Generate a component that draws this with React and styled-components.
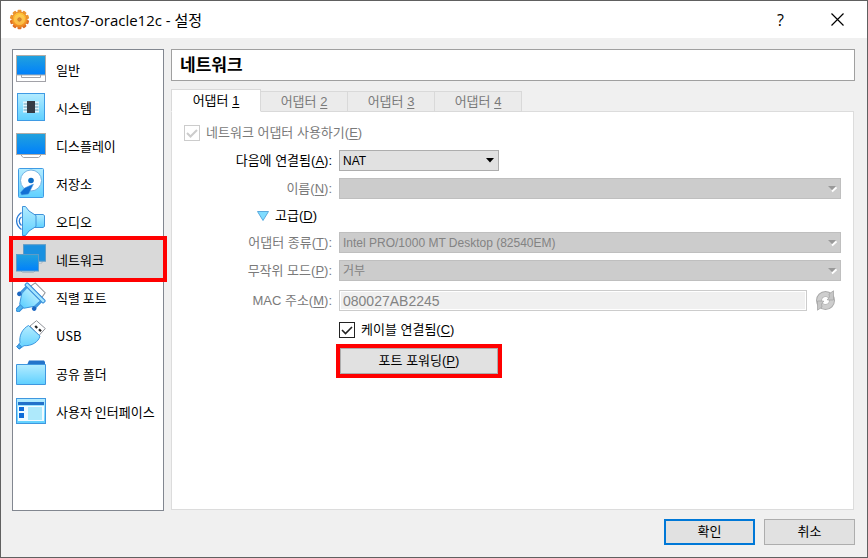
import React from "react";
import styled, { createGlobalStyle, css } from "styled-components";

const korean = `"Liberation Sans", "Noto Sans CJK KR", sans-serif`;

const GlobalStyle = createGlobalStyle`
  *, *::before, *::after { box-sizing: border-box; }
  body { margin: 0; background: #f0f0f0; }
  button, input, select { font: inherit; color: inherit; margin: 0; }
  u { text-underline-offset: 2px; text-decoration-thickness: 1px; }
`;

const Window = styled.div`
  display: flex;
  flex-direction: column;
  min-height: 100vh;
  background: #f0f0f0;
  border: 1px solid #606060;
  color: #000;
  font-family: ${korean};
  font-size: 13px;
  line-height: 16px;
`;

const TitleBar = styled.header`
  display: flex;
  align-items: center;
  height: 37px;
  padding: 0 1px 0 8px;
  background: #fff;
`;

const WindowTitle = styled.h1`
  flex: 1;
  margin: 0 0 0 5px;
  font: 400 15px/20px "Open Sans", "Noto Sans CJK KR", sans-serif;
`;

const CaptionButton = styled.button`
  display: grid;
  place-items: center;
  width: 57px;
  height: 37px;
  padding: 0;
  border: 0;
  background: none;
  font: 400 16px/20px "Open Sans", sans-serif;
`;

const Body = styled.div`
  flex: 1;
  display: flex;
  gap: 7px;
  padding: 11px 12px 0 11px;
`;

const Sidebar = styled.nav`
  flex: none;
  width: 152px;
  background: #fff;
  border: 1px solid #828790;
`;

const SidebarList = styled.ul`
  margin: 0;
  padding: 0;
  list-style: none;
`;

const SidebarItem = styled.button`
  display: flex;
  align-items: center;
  gap: 10px;
  width: 100%;
  height: 38px;
  padding: 0 0 0 3px;
  border: 0;
  background: none;
  font-family: "Noto Sans CJK KR", sans-serif;
  text-align: left;
  white-space: nowrap;
  ${(p) =>
    p.$selected &&
    css`
      position: relative;
      background: #d9d9d9;
      outline: 4px solid #f00;
    `}
`;

const ItemName = styled.span`
  padding-top: 2px;
`;

const Main = styled.main`
  flex: 1;
  display: flex;
  flex-direction: column;
  min-width: 0;
`;

const PageHeading = styled.h2`
  height: 32px;
  margin: 0 0 8px;
  padding: 1px 8px 0;
  background: #fff;
  border: 1px solid #a0a0a0;
  font-size: 17px;
  line-height: 30px;
  font-weight: 700;
`;

const TabList = styled.div`
  position: relative;
  z-index: 1;
  display: flex;
  align-items: flex-end;
  height: 23px;
`;

const Tab = styled.button`
  width: 87px;
  height: 21px;
  padding: 0;
  border: 1px solid #d9d9d9;
  border-left-width: 0;
  background: #ebebeb;
  color: #7a7a7a;
  ${(p) =>
    p.$active &&
    css`
      width: 90px;
      height: 23px;
      border-left-width: 1px;
      border-bottom-color: #fff;
      background: #fff;
      color: #000;
    `}
`;

const Panel = styled.section`
  flex: 1;
  display: flex;
  flex-direction: column;
  gap: 7px;
  margin: -1px 1px 1px 0;
  padding: 13px 12px;
  border: 1px solid #dcdcdc;
  background: #fff;
`;

const Row = styled.div`
  display: grid;
  grid-template-columns: 148px minmax(0, 1fr);
  column-gap: 7px;
  align-items: center;
  margin-top: ${(p) => p.$lead || 0}px;
`;

const FieldLabel = styled.label`
  text-align: right;
  color: ${(p) => (p.$dim ? "#7a7a7a" : "#000")};
`;

const SelectBox = styled.div`
  position: relative;
  width: ${(p) => (p.$narrow ? "160px" : "100%")};
  svg {
    position: absolute;
    right: 4px;
    top: 8px;
    pointer-events: none;
  }
`;

const Select = styled.select`
  display: block;
  appearance: none;
  width: 100%;
  height: 21px;
  padding: 1px 20px 0 3px;
  border: 1px solid #adadad;
  border-radius: 0;
  background: #e1e1e1;
  font-size: 12px;
  &:disabled {
    border-color: #bfbfbf;
    background: #ccc;
    color: #838383;
    opacity: 1;
  }
`;

const Disclosure = styled.button`
  grid-column: 1 / -1;
  display: flex;
  align-items: center;
  gap: 6px;
  height: 19px;
  padding: 0 0 0 73px;
  border: 0;
  background: none;
`;

const MacRow = styled.div`
  display: flex;
  align-items: center;
  gap: 9px;
`;

const TextInput = styled.input`
  flex: 1;
  min-width: 0;
  height: 21px;
  padding: 0 3px;
  border: 1px solid #ccc;
  background: #f0f0f0;
  box-shadow: inset 0 0 0 1px #fff;
  font-size: 14px;
  &:disabled { color: #838383; }
`;

const IconButton = styled.button`
  display: grid;
  width: 25px;
  height: 21px;
  padding: 0;
  border: 0;
  background: none;
`;

const CheckLabel = styled.label`
  display: flex;
  align-items: center;
  gap: 6px;
  height: 16px;
  color: ${(p) => (p.$dim ? "#7a7a7a" : "#000")};
`;

const CheckBox = styled.span`
  position: relative;
  display: flex;
  color: ${(p) => (p.$dim ? "#ccc" : "#222")};
  svg {
    position: absolute;
    inset: 0;
    pointer-events: none;
  }
`;

const CheckInput = styled.input`
  appearance: none;
  width: 16px;
  height: 16px;
  border: 1px solid currentColor;
  background: #fff;
`;

const PushButton = styled.button`
  height: 26px;
  width: 91px;
  padding: 0;
  border: 1px solid #adadad;
  background: #e1e1e1;
  ${(p) => p.$default && css`border: 2px solid #0078d7;`}
  ${(p) =>
    p.$marked &&
    css`
      width: 158px;
      margin-left: 1px;
      outline: 4px solid #f00;
    `}
`;

const Footer = styled.footer`
  display: flex;
  justify-content: flex-end;
  gap: 9px;
  padding: 8px 12px 12px;
`;

function Icon({ children }) {
  return (
    <svg width="30" height="30" viewBox="0 0 30 30" aria-hidden="true">
      <defs>
        <linearGradient id="screen" x1="0" y1="0" x2="0" y2="1">
          <stop offset="0" stopColor="#22a2dc" />
          <stop offset="1" stopColor="#0080fc" />
        </linearGradient>
        <linearGradient id="sky" x1="0" y1="0" x2="0" y2="1">
          <stop offset="0" stopColor="#b4ecff" />
          <stop offset="1" stopColor="#5fd0ff" />
        </linearGradient>
      </defs>
      {children}
    </svg>
  );
}

const GeneralIcon = () => (
  <Icon>
    <rect x=".5" y="20.5" width="29" height="7" fill="#fff" stroke="#a2a2a8" />
    <path d="M5.5 21v2.5h19V21" fill="#fff" stroke="#a2a2a8" />
    <rect x=".5" y="1.5" width="29" height="19.5" fill="url(#screen)" stroke="#b0aca8" />
  </Icon>
);

const SystemIcon = () => (
  <Icon>
    <rect x="1.5" y="1.5" width="27" height="27" fill="url(#sky)" stroke="#3f9be4" />
    <path d="M7 10.5h16M7 13.5h16M7 16.5h16M7 19.5h16" stroke="#e4f4fa" strokeWidth="2" />
    <path d="M8 12h14M8 15h14M8 18h14" stroke="#8ba6b5" strokeWidth="1" />
    <rect x="11" y="9" width="8" height="12" fill="#353b45" />
  </Icon>
);

const DisplayIcon = () => (
  <Icon>
    <path d="M5.5 24v2l2 1.5h15l2-1.5v-2z" fill="#fff" stroke="#a2a2a8" />
    <rect x=".5" y="3.5" width="29" height="21" fill="url(#screen)" stroke="#b0aca8" />
  </Icon>
);

const StorageIcon = () => (
  <Icon>
    <rect x="2.5" y=".5" width="25" height="29" rx="1" fill="url(#sky)" stroke="#3f9be4" />
    <circle cx="15" cy="12.5" r="10.5" fill="#fff" stroke="#75b4e4" />
    <circle cx="15" cy="12.5" r="2.8" fill="#0b6cc5" />
    <path d="M17.5 16L8.5 20 4.5 24.5 5.5 27 12.500 26z" fill="#1270d4" stroke="#4a9ae4" strokeWidth=".5" />
  </Icon>
);

const AudioIcon = () => (
  <Icon>
    <path d="M5.5 6.5C-1 11-1 19 5.5 23.500M5.5 11C2.5 13 2.5 17 5.5 19.5" fill="none" stroke="#2b7cd6" strokeWidth="1.3" />
    <path d="M18 8.500h9l1.5 1v11l-1.5 1h-9z" fill="url(#sky)" stroke="#3f92da" />
    <path d="M6.5.5h3L13 5l7 4.500v11L13 25l-3.5 4.500h-3z" fill="url(#sky)" stroke="#3f92da" />
  </Icon>
);

const NetworkIcon = () => (
  <Icon>
    <path d="M13 17.5l2 1.5h11v-2z" fill="#e9f5fc" stroke="#9eabb5" strokeWidth=".7" />
    <rect x="7.5" y=".7" width="22" height="16.5" fill="#1990e0" stroke="#5d9cc7" />
    <path d="M5 27l1.5 1.5h11L19 27z" fill="#e9f5fc" stroke="#9eabb5" strokeWidth=".7" />
    <rect x=".5" y="10.5" width="22" height="16.5" fill="url(#screen)" stroke="#5e9cc7" />
  </Icon>
);

const SerialIcon = () => (
  <Icon>
    <g transform="rotate(45 15 15)">
      <path d="M7 8l1-6h14l1 6z" fill="#fff" stroke="#8f9298" />
      <path d="M13 26h4v9h-4z" fill="#4eb4ee" stroke="#3189d8" />
      <path d="M4.500 11v9M25.500 11v9" stroke="#3d97df" strokeWidth="2" />
      <path d="M5.500 10h19l-.5 9-6 9h-6l-6-9z" fill="url(#sky)" stroke="#3d97df" />
      <rect x="2" y="7.500" width="26" height="3.500" rx="1" fill="#a6e6ff" stroke="#3189d8" />
      <circle cx="4.500" cy="21" r="2.300" fill="#1c67c2" />
      <circle cx="25.500" cy="21" r="2.300" fill="#1c67c2" />
    </g>
  </Icon>
);

const UsbIcon = () => (
  <Icon>
    <path d="M14 6L20.5.7 29.3 8.500 23 15.500z" fill="#fff" stroke="#8f9298" />
    <path d="M19.200 6l2 2M23 9.300l2 2" stroke="#222" strokeWidth="2.200" />
    <path d="M12.5 5.500L24 16c-1.5 6-8 10-16 9.700L3.5 29 .8 26.800 4 22.500C3 16 6 9 12.500 5.500z" fill="url(#sky)" stroke="#3d97df" />
    <path d="M3 24.500l2.500 2L3 29 .8 26.800z" fill="#4eaae8" stroke="#3189d8" />
  </Icon>
);

const FolderIcon = () => (
  <Icon>
    <path d="M11 7l2-4.500h15l1 1.500v4z" fill="#2474ca" />
    <path d="M.5 6.500h29v20H.5z" fill="url(#sky)" stroke="#3f97df" />
  </Icon>
);

const InterfaceIcon = () => (
  <Icon>
    <rect x=".5" y="2.5" width="29" height="25" fill="url(#sky)" stroke="#3f97df" />
    <rect x="2" y="10" width="26" height="15" fill="#f1fbff" />
    <rect x="2" y="6" width="26" height="3" fill="#2271ca" />
    <rect x="3" y="11" width="5" height="4" fill="#0f6cd8" />
    <rect x="3" y="17" width="5" height="5" fill="#0f6cd8" />
    <rect x="12" y="11" width="14" height="13" fill="#aee9fb" />
  </Icon>
);

const teeth = Array.from({ length: 10 }, (_, i) => i * 36);

const GearIcon = () => (
  <svg width="21" height="21" viewBox="0 0 21 21" aria-hidden="true">
    <defs>
      <linearGradient id="gear" x1="0" y1="0" x2="0" y2="1">
        <stop offset="0" stopColor="#ffc536" />
        <stop offset="1" stopColor="#f2861c" />
      </linearGradient>
    </defs>
    {teeth.map((a) => (
      <rect key={a} x="8.500" y=".8" width="4" height="5" rx="1" fill={a > 90 && a < 270 ? "#df6e22" : "#eb9632"} transform={`rotate(${a} 10.500 10.500)`} />
    ))}
    <circle cx="10.5" cy="10.5" r="7.5" fill="url(#gear)" stroke="#e88a2a" />
    <circle cx="10.5" cy="10.5" r="5.5" fill="#ffd860" opacity=".6" />
    <circle cx="10.5" cy="10.5" r="1.7" fill="#e08a2a" stroke="#c87a34" />
  </svg>
);

const RefreshIcon = () => (
  <svg width="19" height="21" viewBox="0 0 19 21" aria-hidden="true">
    <circle cx="9.5" cy="10.5" r="6.5" fill="none" stroke="#a9a9a9" strokeWidth="6" />
    <circle cx="9.5" cy="10.5" r="6.3" fill="none" stroke="#cecece" strokeWidth="4.500" />
    <path d="M13 4l4.500-3.200V10H11l2.500-3zM6 17l-4.500 3.200V11H8l-2.500 3z" fill="#c6c6c6" stroke="#a6a6a6" strokeWidth=".8" />
    <path d="M9.500 7l2 1-1 2 2 1-3 3-2-1 1-2-2-1z" fill="#fff" />
  </svg>
);

const items = [
  ["일반", GeneralIcon],
  ["시스템", SystemIcon],
  ["디스플레이", DisplayIcon],
  ["저장소", StorageIcon],
  ["오디오", AudioIcon],
  ["네트워크", NetworkIcon],
  ["직렬 포트", SerialIcon],
  ["USB", UsbIcon],
  ["공유 폴더", FolderIcon],
  ["사용자 인터페이스", InterfaceIcon],
];

function Combo({ id, value, disabled, narrow }) {
  return (
    <SelectBox $narrow={narrow}>
      <Select id={id} disabled={disabled}>
        <option>{value}</option>
      </Select>
      <svg width="10" height="7" viewBox="0 0 10 7" aria-hidden="true">
        {disabled && <path d="M5 5.500l4.500-4" stroke="#fff" strokeWidth="1.800" />}
        <path d={disabled ? "M1 0h8L5 4z" : "M1 0h8L5 4.500z"} fill={disabled ? "#999" : "#000"} />
      </svg>
    </SelectBox>
  );
}

function Check({ dim, children }) {
  return (
    <CheckLabel $dim={dim}>
      <CheckBox $dim={dim}>
        <CheckInput type="checkbox" defaultChecked disabled={dim} />
        <svg width="16" height="16" viewBox="0 0 16 16" aria-hidden="true">
          <path d="M3 8l3.500 3.500L13 5" fill="none" stroke="currentColor" strokeWidth={dim ? 2 : 1.6} />
        </svg>
      </CheckBox>
      <span>{children}</span>
    </CheckLabel>
  );
}

export default function App() {
  return (
    <Window>
      <GlobalStyle />
      <TitleBar>
        <GearIcon />
        <WindowTitle>centos7-oracle12c - 설정</WindowTitle>
        <CaptionButton aria-label="도움말">?</CaptionButton>
        <CaptionButton aria-label="닫기">
          <svg width="13" height="13" viewBox="0 0 13 13" aria-hidden="true">
            <path d="M.5.5l12 12M12.500.5l-12 12" stroke="#000" strokeWidth="1.200" />
          </svg>
        </CaptionButton>
      </TitleBar>
      <Body>
        <Sidebar>
          <SidebarList>
            {items.map(([name, Glyph]) => (
              <li key={name}>
                <SidebarItem $selected={name === "네트워크"}>
                  <Glyph />
                  <ItemName>{name}</ItemName>
                </SidebarItem>
              </li>
            ))}
          </SidebarList>
        </Sidebar>
        <Main>
          <PageHeading>네트워크</PageHeading>
          <TabList role="tablist">
            {[1, 2, 3, 4].map((n) => (
              <Tab key={n} role="tab" aria-selected={n === 1} $active={n === 1}>
                어댑터 <u>{n}</u>
              </Tab>
            ))}
          </TabList>
          <Panel role="tabpanel">
            <Check dim>
              네트워크 어댑터 사용하기(<u>E</u>)
            </Check>
            <Row $lead={2}>
              <FieldLabel htmlFor="attached">
                다음에 연결됨(<u>A</u>):
              </FieldLabel>
              <Combo id="attached" value="NAT" narrow />
            </Row>
            <Row>
              <FieldLabel htmlFor="name" $dim>
                이름(<u>N</u>):
              </FieldLabel>
              <Combo id="name" value="" disabled />
            </Row>
            <Row>
              <Disclosure aria-expanded="true">
                <svg width="12" height="10" viewBox="0 0 12 10" aria-hidden="true">
                  <path d="M.5.5h11L6 9.500z" fill="#7fdcff" stroke="#5aa9dd" />
                </svg>
                <span>
                  고급(<u>D</u>)
                </span>
              </Disclosure>
            </Row>
            <Row>
              <FieldLabel htmlFor="type" $dim>
                어댑터 종류(<u>T</u>):
              </FieldLabel>
              <Combo id="type" value="Intel PRO/1000 MT Desktop (82540EM)" disabled />
            </Row>
            <Row>
              <FieldLabel htmlFor="mode" $dim>
                무작위 모드(<u>P</u>):
              </FieldLabel>
              <Combo id="mode" value="거부" disabled />
            </Row>
            <Row $lead={2}>
              <FieldLabel htmlFor="mac" $dim>
                MAC 주소(<u>M</u>):
              </FieldLabel>
              <MacRow>
                <TextInput id="mac" defaultValue="080027AB2245" disabled />
                <IconButton disabled aria-label="새로 고침">
                  <RefreshIcon />
                </IconButton>
              </MacRow>
            </Row>
            <Row $lead={4}>
              <span />
              <Check>
                케이블 연결됨(<u>C</u>)
              </Check>
            </Row>
            <Row $lead={3}>
              <span />
              <PushButton $marked>
                포트 포워딩(<u>P</u>)
              </PushButton>
            </Row>
          </Panel>
        </Main>
      </Body>
      <Footer>
        <PushButton $default>확인</PushButton>
        <PushButton>취소</PushButton>
      </Footer>
    </Window>
  );
}
